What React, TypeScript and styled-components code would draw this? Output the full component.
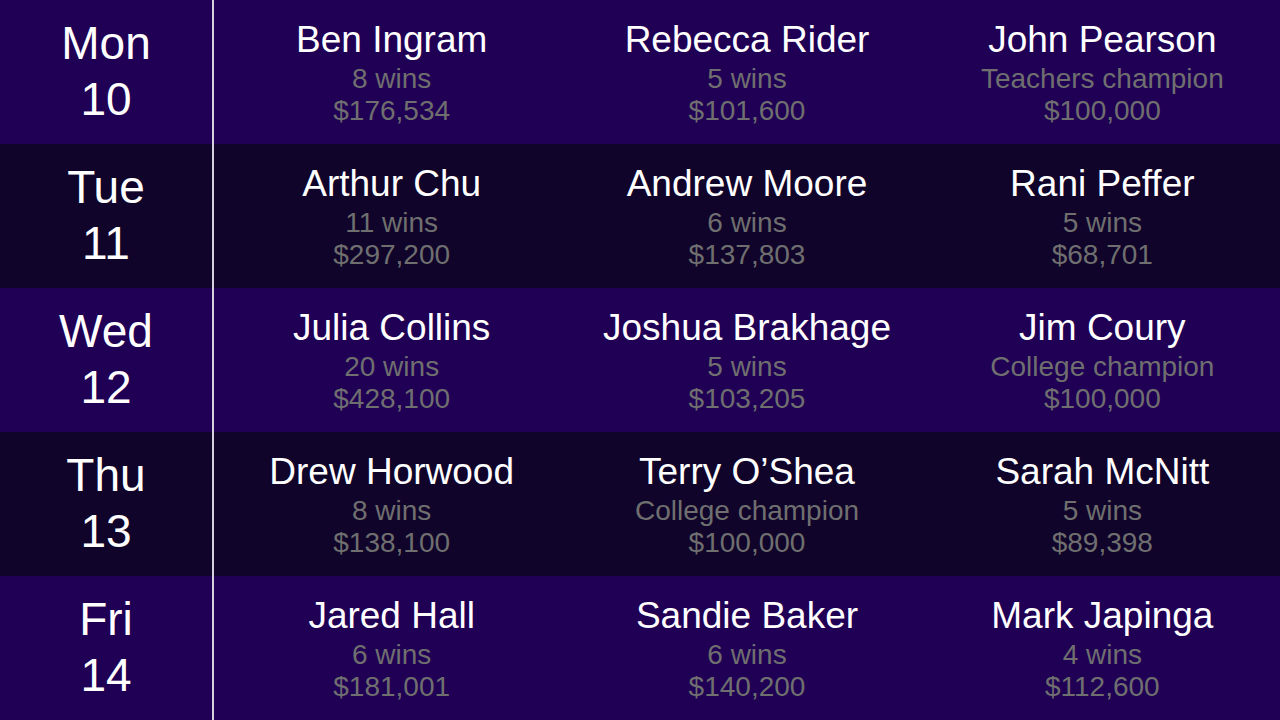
import styled, { createGlobalStyle } from 'styled-components';

const GlobalStyle = createGlobalStyle`
  html, body {
    margin: 0;
    padding: 0;
    background: #200055;
  }
  body {
    font-family: "Liberation Sans", Arial, sans-serif;
  }
`;

type Champ = { name: string; note: string; money: string };
type Day = { day: string; date: string; champs: Champ[] };

const days: Day[] = [
  {
    day: 'Mon',
    date: '10',
    champs: [
      { name: 'Ben Ingram', note: '8 wins', money: '$176,534' },
      { name: 'Rebecca Rider', note: '5 wins', money: '$101,600' },
      { name: 'John Pearson', note: 'Teachers champion', money: '$100,000' }
    ]
  },
  {
    day: 'Tue',
    date: '11',
    champs: [
      { name: 'Arthur Chu', note: '11 wins', money: '$297,200' },
      { name: 'Andrew Moore', note: '6 wins', money: '$137,803' },
      { name: 'Rani Peffer', note: '5 wins', money: '$68,701' }
    ]
  },
  {
    day: 'Wed',
    date: '12',
    champs: [
      { name: 'Julia Collins', note: '20 wins', money: '$428,100' },
      { name: 'Joshua Brakhage', note: '5 wins', money: '$103,205' },
      { name: 'Jim Coury', note: 'College champion', money: '$100,000' }
    ]
  },
  {
    day: 'Thu',
    date: '13',
    champs: [
      { name: 'Drew Horwood', note: '8 wins', money: '$138,100' },
      { name: 'Terry O\u2019Shea', note: 'College champion', money: '$100,000' },
      { name: 'Sarah McNitt', note: '5 wins', money: '$89,398' }
    ]
  },
  {
    day: 'Fri',
    date: '14',
    champs: [
      { name: 'Jared Hall', note: '6 wins', money: '$181,001' },
      { name: 'Sandie Baker', note: '6 wins', money: '$140,200' },
      { name: 'Mark Japinga', note: '4 wins', money: '$112,600' }
    ]
  }
];

const Board = styled.div`
  width: 1280px;
  height: 720px;
  display: grid;
  grid-template-rows: repeat(5, 144px);
  overflow: hidden;
`;

const Row = styled.div<{ $dark: boolean }>`
  display: grid;
  grid-template-columns: 212px 2px 1fr 1fr 1fr;
  background: ${(p) => (p.$dark ? '#10042a' : '#200055')};
`;

const Divider = styled.div`
  background: #d4d2de;
`;

const DayCell = styled.div`
  display: flex;
  flex-direction: column;
  align-items: center;
  justify-content: center;
  padding-bottom: 2px;
  color: #ffffff;
  font-size: 46px;
  line-height: 56px;
`;

const ChampCell = styled.div`
  display: flex;
  flex-direction: column;
  align-items: center;
  justify-content: center;
  white-space: nowrap;
`;

const Name = styled.div`
  color: #ffffff;
  font-size: 37px;
  line-height: 46px;
`;

const Sub = styled.div`
  color: #6f6f6f;
  font-size: 28px;
  line-height: 32px;
`;

export default function App() {
  return (
    <>
      <GlobalStyle />
      <Board>
        {days.map((d, i) => (
          <Row key={d.day} $dark={i % 2 === 1}>
            <DayCell>
              <span>{d.day}</span>
              <span>{d.date}</span>
            </DayCell>
            <Divider />
            {d.champs.map((c) => (
              <ChampCell key={c.name}>
                <Name>{c.name}</Name>
                <Sub>{c.note}</Sub>
                <Sub>{c.money}</Sub>
              </ChampCell>
            ))}
          </Row>
        ))}
      </Board>
    </>
  );
}
